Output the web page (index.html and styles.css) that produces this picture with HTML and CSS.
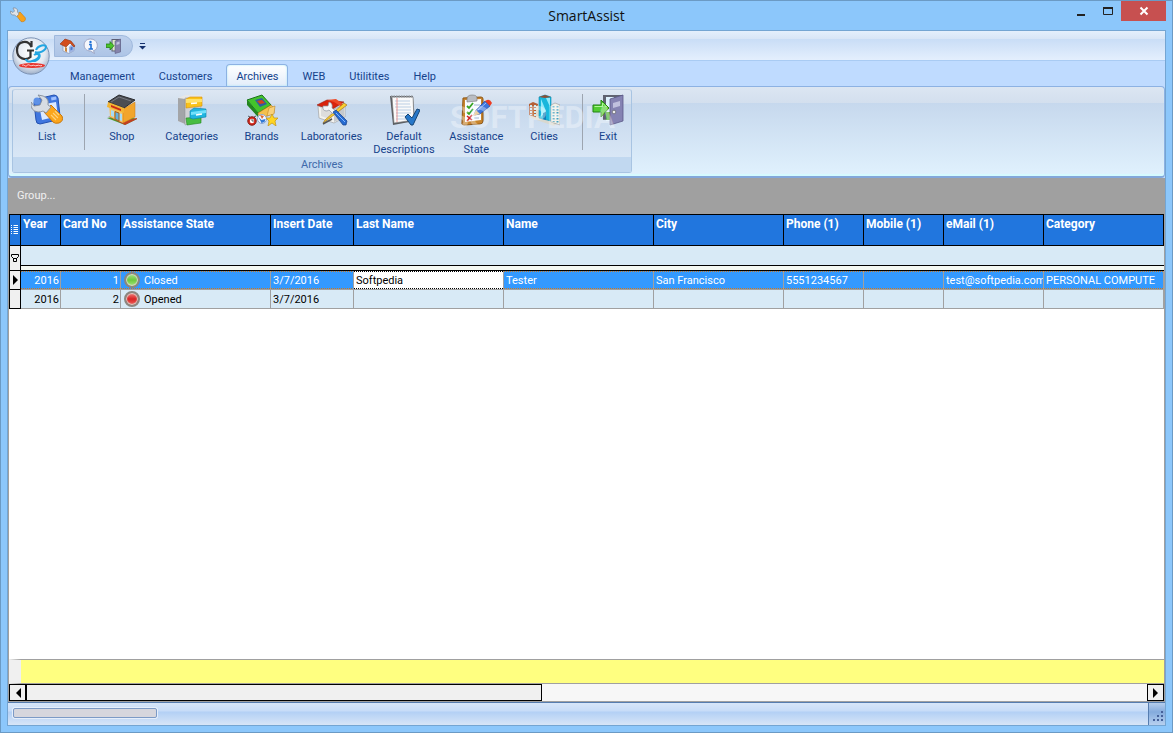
FILE: index.html
```html
<!DOCTYPE html>
<html lang="en">
<head>
  <meta charset="UTF-8" />
  <meta name="viewport" content="width=device-width, initial-scale=1.0"/>
  <title>SmartAssist</title>
  <link rel="stylesheet" href="styles.css">
</head>
<body>
<div class="window">

  <header class="titlebar">
    <svg class="app-icon" viewBox="0 0 16 16">
      <path d="M6 8l4-3 5 5.500c1.500 2.500-1 5-4 4z" fill="#f7a21b" stroke="#c9790d" stroke-width=".6"/>
      <path d="M3 1l1.500 3-1.500 1.500L.5 4C0 7 2 8.500 4.500 8l2 1.500L9 7 7.500 5C8 2 6 .5 3 1z" fill="#dfe3e8" stroke="#7f8893" stroke-width=".7"/>
    </svg>
    <h1>SmartAssist</h1>
    <div class="window-buttons">
      <button class="win-btn" aria-label="Minimize"><svg viewBox="0 0 12 12"><path d="M2 10h8" stroke="#222" stroke-width="2"/></svg></button>
      <button class="win-btn" aria-label="Maximize"><svg viewBox="0 0 12 12"><path d="M1.500 2.500h9v7h-9z" fill="none" stroke="#222"/><path d="M1 3h10" stroke="#222" stroke-width="2"/></svg></button>
      <button class="win-btn close-btn" aria-label="Close"><svg viewBox="0 0 12 12"><path d="M2.500 2.500l7 7M9.500 2.500l-7 7" stroke="#fff" stroke-width="2"/></svg></button>
    </div>
  </header>

  <div class="client">

    <div class="quick-bar">
      <button class="orb" aria-label="Application menu">
        <svg viewBox="0 0 38 38">
          <defs>
            <radialGradient id="orbFill" cx=".5" cy=".4" r=".6">
              <stop offset="0" stop-color="#ffffff"/>
              <stop offset=".65" stop-color="#e3e9f1"/>
              <stop offset="1" stop-color="#9fb0c9"/>
            </radialGradient>
          </defs>
          <circle cx="19" cy="19" r="18.200" fill="url(#orbFill)" stroke="#7d93b4"/>
          <path d="M19.500 4v6C16 2 5 4 5 13c0 9 9 11 13.500 7v-6M15 13.500h7" fill="none" stroke="#333" stroke-width="2.200"/>
          <path d="M14 22c0 4 8 3 12-1 3-4-1-5-4-3M24 13c2-5 10-6 10-3s-6 7-11 5M26 16c3 2 2 6-3 8" fill="none" stroke="#22a5e2" stroke-width="2"/>
          <ellipse cx="20" cy="28.500" rx="13" ry="2.500" fill="#e8352e"/>
          <path d="M10 28.500c2-2 3 2 5 0s3 1 5 0 3 1 5 0 3 1 5 0" fill="none" stroke="#fff" stroke-width=".8"/>
        </svg>
      </button>
      <div class="quick-access">
        <button aria-label="Home">
          <svg viewBox="0 0 16 16">
            <path d="M3 7v6l6 2.500 5-3V7l-3-3z" fill="#eef1f7" stroke="#7d8aa8" stroke-width=".6"/>
            <path d="M9 15V9l3-3 2 2v5z" fill="#9eb4e2"/><path d="M10.500 9.500l2-1v3l-2 1z" fill="#4d79cb"/>
            <path d="M0 6l5-5 6 2 4 5-1 1-4-4-4 4z" fill="#d34d1c" stroke="#8f300f" stroke-width=".6"/>
            <path d="M5 9l2 .7V14l-2-.8z" fill="#c9843a"/>
          </svg>
        </button>
        <button aria-label="Information">
          <svg viewBox="0 0 16 16">
            <path d="M7.500 1C16 1 16 12 10.500 12.500l1 3-4-2.500C-1 13-1 1 7.500 1z" fill="#f5f7fc" stroke="#9aa0c0" stroke-width=".9"/>
            <circle cx="7.500" cy="4" r="1.200" fill="#1d70d8"/>
            <path d="M6 6.500h2V11M5.500 11h4.500" fill="none" stroke="#1d70d8" stroke-width="1.600"/>
          </svg>
        </button>
        <button aria-label="Exit">
          <svg viewBox="0 0 32 32">
            <path d="M11 2h18v25H11z" fill="#5c5e73"/><path d="M13 4h8v21h-8z" fill="#dce9c8"/>
            <path d="M18 6l11-4v26l-11 3z" fill="#8584ab" stroke="#55557d"/><path d="M21 9l6-2v5l-6 2z" fill="#c0c0de"/>
            <path d="M0 12h8V7l8 8.500L8 24v-5H0z" fill="#4bc32b" stroke="#237c12" stroke-width="1.500"/>
          </svg>
        </button>
      </div>
      <button class="customize" aria-label="Customize toolbar"><svg viewBox="0 0 7 7"><path d="M1 .5h5" stroke="#15316e"/><path d="M0 3h7L3.500 6.500z" fill="#15316e"/></svg></button>
    </div>

    <nav class="tabs">
      <a href="#">Management</a>
      <a href="#">Customers</a>
      <a href="#" class="active">Archives</a>
      <a href="#">WEB</a>
      <a href="#">Utilitites</a>
      <a href="#">Help</a>
    </nav>

    <section class="ribbon">
      <div class="ribbon-group">
        <div class="ribbon-items">
          <button class="item list">
            <svg viewBox="0 0 32 32">
              <path d="M6 5l17-4q3 0 4 3l2 18q0 3-3 4L9 30q-4 0-4-4L3 9q0-3 3-4z" fill="#3f76df" stroke="#2451b0"/>
              <path d="M8 11l17-3 2 14-16 4z" fill="#dbe9ff"/><path d="M20 3.500l5-1 .5 3-5 1z" fill="#9fc0ff"/>
              <path d="M13 18l7-7 11 11q2 5-3 7-4 1-6-1z" fill="#fba51c" stroke="#c87810"/>
              <path d="M22 19l5 5M20 21l5 5M24 17l4 4" stroke="#ffd27a" stroke-width="1.200"/>
              <path d="M7 1l4 5-2 5-6 1-3-4q-1 9 7 10 3 0 5-1l3 2 5-6-3-2q2-9-10-10z" fill="#d7dce3" stroke="#838c99" stroke-width=".9"/>
              <circle cx="6" cy="7" r="3.500" fill="#5e91e6"/>
            </svg>
            <span>List</span>
          </button>
          <div class="separator"></div>
          <button class="item">
            <svg viewBox="0 0 32 32">
              <path d="M1 24l15-3 15 4-12 6z" fill="#4f9a2d"/><path d="M2 22l13 7 4 2 12-6v-1l-12 3z" fill="#c33e22"/>
              <path d="M3 10l14 5v14L4 23z" fill="#f5c363"/><path d="M17 15l12-7v15l-12 6z" fill="#f2a52c" stroke="#c97b16" stroke-width=".5"/>
              <path d="M2 8L13 1l16 5-11 8z" fill="#4b4d52" stroke="#292a2d"/><path d="M5 8l8-5 12 4" fill="none" stroke="#777a80"/>
              <path d="M2 8l16 6v5L1 13z" fill="#f3b433"/><path d="M5 11l10 4v2L5 13z" fill="#ca2918"/>
              <path d="M5 16l3 1v6l-3-1zM13 19l3 1v7l-3-1z" fill="#a9dcf5"/><path d="M9 17.500l4 1.500v8l-4-2z" fill="#66b1dc" stroke="#a65f18"/>
            </svg>
            <span>Shop</span>
          </button>
          <button class="item">
            <svg viewBox="0 0 32 32">
              <path d="M2 4L9 1h17v26l-15 4-9-4z" fill="#e7e7e7"/><path d="M2 4l7 1v25l-7-3z" fill="#a3a5a8"/><path d="M9 4h16v23L9 31z" fill="#cfd1d4" stroke="#8a8c90" stroke-width=".5"/>
              <path d="M10 24l15-1v6l-14 2z" fill="#47bd42" stroke="#24881f" stroke-width=".6"/>
              <path d="M10 5l4-2h12v9l-16 2z" fill="#f9c21a" stroke="#d78f08" stroke-width=".6"/><path d="M10 5h16v3l-16 1z" fill="#ffe268"/><path d="M15 9.500l6-.5" stroke="#fff" stroke-width="1.500"/>
              <path d="M14 17l4-3 12 1v8l-13 2-3-1z" fill="#20b5df" stroke="#087fa9" stroke-width=".6"/><path d="M15 18l15-2v3l-15 2z" fill="#71e1fb"/><path d="M20 21l6-1" stroke="#fff" stroke-width="1.500"/>
            </svg>
            <span>Categories</span>
          </button>
          <button class="item">
            <svg viewBox="0 0 32 32">
              <path d="M1 6L16 1l9 10-13 8z" fill="#43c32c" stroke="#19721c"/><path d="M1 6v5l11 12v-4z" fill="#23851e"/><path d="M12 19l13-8 3 3v5l-14 6z" fill="#f4c04c" stroke="#b77a1b" stroke-width=".6"/>
              <path d="M9 6l7-2 5 6-7 3z" fill="#325c9f"/><path d="M11 7l5-1 3 3-5 1z" fill="#d6421a"/>
              <path d="M23 14l6-2-1 8-7 2z" fill="#f8d17a" stroke="#b77a1b" stroke-width=".5"/>
              <circle cx="6" cy="27" r="4.200" fill="#d52d21" stroke="#84140c"/><circle cx="6" cy="27" r="2.200" fill="#fff"/><path d="M6 25v2h2M2 22l2 1M10 22l-2 1" stroke="#222" stroke-width=".7" fill="none"/>
              <circle cx="16" cy="25" r="4.500" fill="#f5f8ff" stroke="#8aa4cf"/><path d="M12.500 23l3 3 4-1-1 3-3 1z" fill="#3079d5"/><path d="M14 21l4 1-2 3z" fill="#e26929"/>
              <path d="M26 20l2 4h4l-3 3 1 5-4-3-4 3 1-5-3-3h4z" fill="#ffd522" stroke="#c29214" stroke-width=".7"/>
            </svg>
            <span>Brands</span>
          </button>
          <button class="item">
            <svg viewBox="0 0 32 32">
              <path d="M2 12l13 5 14-7v13l-11 6-15-5z" fill="#f2f2ef" stroke="#999" stroke-width=".6"/><path d="M5 22l11 4V16L5 13z" fill="#ddd"/><path d="M18 17l10-5v11l-10 5z" fill="#c5c9cd"/>
              <path d="M1 11l10-5 17 2-13 8z" fill="#d9230c" stroke="#94190d" stroke-width=".6"/><path d="M11 6l9-1 8 6-2 2-8-5z" fill="#ed4a27"/>
              <path d="M31 11L10 27l-3 2 2-3L28 9z" fill="#f8cf32" stroke="#9a6a10" stroke-width=".6"/><path d="M7 30l9-5" stroke="#555" stroke-width="1.500"/>
              <path d="M7 12q-1 5 4 5l2-1 4 4 3-3-4-3q1-5-3-6l-1 4z" fill="#f3f5f8" stroke="#8c929d" stroke-width=".7"/>
              <path d="M17 18l3-2 11 11-1 4h-3z" fill="#266bd1" stroke="#153e86" stroke-width=".7"/><path d="M20 19l9 9" stroke="#82b7ff"/>
            </svg>
            <span>Laboratories</span>
          </button>
          <button class="item wide">
            <svg viewBox="0 0 32 32">
              <path d="M2 2h23l2 25-22 4z" fill="#5a5d61"/><path d="M4 3h21l1 23-20 3z" fill="#fafafa" stroke="#777" stroke-width=".6"/>
              <path d="M7 7h15M7 10h15M7 13h16M8 16h15M8 19h15M8 22h13M8 25h10" stroke="#a9c3de" stroke-width=".8"/><path d="M9 4v24" stroke="#e57b78" stroke-width=".8"/>
              <path d="M3 2.500h22" stroke="#8f9297" stroke-width="2" stroke-dasharray="1.500 1"/>
              <path d="M17 23l3-3 4 4 5-9 3 1-7 15h-2z" fill="#2878c9" stroke="#174676"/>
            </svg>
            <span>Default<br>Descriptions</span>
          </button>
          <button class="item">
            <svg viewBox="0 0 32 32">
              <path d="M3 4l18-1q2 0 2 2v22q0 3-3 3L4 31q-3 0-2-3z" fill="#c6832c" stroke="#8f5715"/>
              <path d="M5 6l16-1v21L5 28z" fill="#f9fbff"/><path d="M7 5q0-4 5-4t5 3v3L7 8z" fill="#b9bdc3" stroke="#777" stroke-width=".6"/>
              <path d="M7 12l2 2 4-5M7 18l2 2 4-5" fill="none" stroke="#37a323" stroke-width="1.800"/><path d="M7 22l5 4M12 21l-5 6" stroke="#cf1f1f" stroke-width="1.600"/><path d="M14 11h6M14 24h5" stroke="#9fb4d4"/>
              <path d="M14 21l2-5L25 7l5 5-10 8z" fill="#3e75db" stroke="#2147a0" stroke-width=".7"/><path d="M25 7l2-1q3-1 5 3l-2 3z" fill="#ec3b22"/><path d="M13 22l3-6 4 4z" fill="#e9cfa4"/><path d="M18 16l8-7" stroke="#9cc0ff"/>
            </svg>
            <span>Assistance<br>State</span>
          </button>
          <button class="item narrow">
            <svg viewBox="0 0 32 32">
              <path d="M0 23l9-2 22 7-5 4z" fill="#d8d8cf"/>
              <path d="M1 10l4-2 5 2v14l-9-3z" fill="#b56036"/><path d="M3 11v10M7 11v12" stroke="#cbe8f4" stroke-width="2" stroke-dasharray="2 1"/>
              <path d="M8 12l4-1v14l-4-1z" fill="#e1dccb"/>
              <path d="M11 3l6-2 6 2v24l-12-3z" fill="#18b7dc" stroke="#0989b2" stroke-width=".6"/><path d="M13 5l5 12-5 6zM22 4v9l-4-9z" fill="#93eafa"/><path d="M11 3l6-2 6 2-6 1z" fill="#8a5037"/><path d="M15 19l3-1v8l-3-1z" fill="#0b7ebb"/>
              <path d="M23 11l4-2 5 2v20l-9-3z" fill="#f0f0e9" stroke="#888" stroke-width=".5"/><path d="M25.500 12v16M29.500 12v17" stroke="#43a0c2" stroke-width="2" stroke-dasharray="1.500 1.500"/>
            </svg>
            <span>Cities</span>
          </button>
          <div class="separator"></div>
          <button class="item exit">
            <svg viewBox="0 0 32 32">
              <path d="M11 1h20v25H11z" fill="#606371"/><path d="M14 3h8v24h-8z" fill="#dff3ff"/><path d="M14 18h8v8h-8z" fill="#4eab31"/>
              <path d="M18 5l13-4v26l-13 4z" fill="#8583b3" stroke="#5b5988" stroke-width=".8"/><path d="M21 9l7-2v5l-7 2z" fill="#c0c0de"/><circle cx="22" cy="18" r="1.800" fill="#eee" stroke="#555" stroke-width=".6"/>
              <path d="M1 11h8V6l8 8-8 9v-5H1z" fill="#53cd32" stroke="#248313"/><path d="M2.500 12.500h8V9l4 4" fill="none" stroke="#b2f79a"/>
            </svg>
            <span>Exit</span>
          </button>
        </div>
        <div class="group-caption">Archives</div>
        <div class="watermark">SOFTPEDIA</div>
      </div>
    </section>

    <main class="grid">
      <div class="group-panel">Group...</div>

      <div class="grid-body">
        <table>
          <colgroup>
            <col class="c-mark"><col class="c-year"><col class="c-card"><col class="c-long"><col class="c-date"><col class="c-long"><col class="c-long"><col class="c-city"><col class="c-phone"><col class="c-phone"><col class="c-mail"><col>
          </colgroup>
          <thead>
            <tr>
              <th class="mark" aria-label="Columns"><svg viewBox="0 0 8 10"><path d="M2.500 .5H7M2.500 2.500H7M2.500 4.500H7M2.500 6.500H7M2.500 8.500H7" stroke="#fff"/><path d="M.5 0v9" stroke="#fff" stroke-dasharray="1 1"/></svg></th>
              <th>Year</th>
              <th>Card No</th>
              <th>Assistance State</th>
              <th>Insert Date</th>
              <th>Last Name</th>
              <th>Name</th>
              <th>City</th>
              <th>Phone (1)</th>
              <th>Mobile (1)</th>
              <th>eMail (1)</th>
              <th>Category</th>
            </tr>
          </thead>
          <tbody>
            <tr class="filter">
              <td class="mark"><svg viewBox="0 0 8 10"><path d="M.5 1.500h7v2l-2 2h-3l-2-2zM2.500 5.500h3v3h-3z" fill="none" stroke="#000"/></svg></td>
              <td colspan="11"></td>
            </tr>
            <tr class="selected">
              <td class="mark"><svg viewBox="0 0 8 10"><path d="M2 0l5 5-5 5z"/></svg></td>
              <td class="num">2016</td>
              <td class="num">1</td>
              <td><span class="state"><i class="led green"></i>Closed</span></td>
              <td>3/7/2016</td>
              <td class="editing"><input type="text" value="Softpedia" aria-label="Last Name"></td>
              <td>Tester</td>
              <td>San Francisco</td>
              <td>5551234567</td>
              <td></td>
              <td>test@softpedia.com</td>
              <td>PERSONAL COMPUTE</td>
            </tr>
            <tr>
              <td class="mark"></td>
              <td class="num">2016</td>
              <td class="num">2</td>
              <td><span class="state"><i class="led red"></i>Opened</span></td>
              <td>3/7/2016</td>
              <td></td>
              <td></td>
              <td></td>
              <td></td>
              <td></td>
              <td></td>
              <td></td>
            </tr>
          </tbody>
        </table>
      </div>

      <div class="summary"></div>

      <div class="scrollbar">
        <button aria-label="Scroll left"><svg viewBox="0 0 6 10"><path d="M6 0v10L1 5z"/></svg></button>
        <div class="track"><div class="thumb"></div></div>
        <button aria-label="Scroll right"><svg viewBox="0 0 6 10"><path d="M0 0v10l5-5z"/></svg></button>
      </div>
    </main>

    <footer class="statusbar">
      <div class="progress"></div>
      <div class="grip">
        <svg viewBox="0 0 12 12"><path d="M8 0h2v2H8zM4 4h2v2H4zM8 4h2v2H8zM0 8h2v2H0zM4 8h2v2H4zM8 8h2v2H8z" fill="#45619a"/></svg>
      </div>
    </footer>

  </div>
</div>
</body>
</html>
```
FILE: styles.css
```css
* {
  box-sizing: border-box;
  margin: 0;
  padding: 0;
}

body {
  font-family: Roboto, "Liberation Sans", sans-serif;
  font-size: 11px;
  line-height: 13px;
  color: #000;
}

button {
  font: inherit;
  color: inherit;
  background: none;
  border: none;
}

svg {
  display: block;
}

.window {
  display: flex;
  flex-direction: column;
  height: 100vh;
  padding: 0 6px;
  border: 1px solid #6b9ac4;
  border-bottom-width: 1px;
  padding-bottom: 6px;
  background: #8cc7fb;
}

/* Title bar */
.titlebar {
  position: relative;
  flex: 0 0 29px;
}

.app-icon {
  position: absolute;
  left: 3px;
  top: 6px;
  width: 16px;
  height: 16px;
}

.titlebar h1 {
  font-family: "Open Sans", "Noto Sans", sans-serif;
  font-size: 14px;
  font-weight: 400;
  line-height: 29px;
  text-align: center;
  color: #111;
}

.window-buttons {
  position: absolute;
  top: 0;
  right: 0;
  display: flex;
}

.win-btn {
  display: flex;
  align-items: center;
  justify-content: center;
  width: 27px;
  height: 20px;
}

.win-btn svg {
  width: 12px;
  height: 12px;
}

.close-btn {
  width: 45px;
  background: #c75050;
}

.client {
  display: flex;
  flex-direction: column;
  flex: 1;
  min-height: 0;
  border: 1px solid #74a5d2;
  background: #bfdbff;
}

/* Quick access bar */
.quick-bar {
  position: relative;
  display: flex;
  align-items: flex-start;
  flex: 0 0 30px;
  padding: 4px 0 0 46px;
  border-bottom: 1px solid #a9cbf3;
  background: linear-gradient(#e4effc 0, #d8e5f6 8px, #c9ddf6 8px, #e4effd 29px);
}

.orb {
  position: absolute;
  left: 4px;
  top: 6px;
  width: 38px;
  height: 38px;
  z-index: 2;
}

.orb svg {
  width: 38px;
  height: 38px;
}

.quick-access {
  display: flex;
  align-items: center;
  gap: 7px;
  height: 22px;
  width: 79px;
  padding-left: 5px;
  border: 1px solid #9fb9dd;
  border-radius: 0 11px 11px 0;
  background: linear-gradient(#bdd0ec, #aec5e6);
}

.quick-access svg {
  width: 16px;
  height: 16px;
}

.customize {
  margin: 8px 0 0 6px;
}

.customize svg {
  width: 7px;
  height: 7px;
}

/* Tabs */
.tabs {
  display: flex;
  align-items: flex-end;
  flex: 0 0 25px;
  padding-left: 52px;
  z-index: 1;
}

.tabs a {
  height: 22px;
  padding: 5px 9px 0;
  margin-right: 4px;
  border: 1px solid transparent;
  color: #15428b;
  text-decoration: none;
}

.tabs a.active {
  border-color: #8db2e3;
  border-bottom: none;
  border-radius: 4px 4px 0 0;
  background: linear-gradient(#ffffff, #e3edfa);
  box-shadow: inset 0 0 2px #9fe8f5;
}

/* Ribbon */
.ribbon {
  flex: 0 0 92px;
  padding: 2px 3px;
  border: 1px solid #8db2e3;
  border-bottom: 2px solid #83a8db;
  border-radius: 4px;
  background: linear-gradient(#dce6f2 0, #d3dfee 16px, #c6d8ed 16px, #e0f1fd 88px);
  box-shadow: inset 0 -2px 1px #d5fbff;
}

.ribbon-group {
  position: relative;
  width: 620px;
  height: 84px;
  border: 1px solid #a8c4e2;
  border-top-color: #c3d3e5;
  border-radius: 3px;
  background: linear-gradient(#dde7f3 0, #d2dfee 14px, #c5d7ec 14px, #d9e7f6 68px);
}

.ribbon-items {
  display: flex;
  height: 67px;
  padding-top: 4px;
}

.item {
  display: flex;
  flex-direction: column;
  align-items: center;
  gap: 4px;
  width: 70px;
  color: #15428b;
}

.item svg {
  width: 32px;
  height: 32px;
}

.item span {
  white-space: nowrap;
}

.item.list {
  padding-right: 2px;
}

.item.wide {
  width: 75px;
}

.item.narrow {
  width: 66px;
  margin-right: 4px;
}

.item.exit {
  width: 46px;
}

.separator {
  width: 1px;
  height: 56px;
  margin: 0 2px 0 1px;
  background: #9da5b0;
}

.group-caption {
  height: 15px;
  line-height: 15px;
  text-align: center;
  color: #3e6aaa;
  background: #c1d8f0;
}

.watermark {
  position: absolute;
  left: 437px;
  top: 15px;
  font-size: 31px;
  line-height: 26px;
  font-weight: 700;
  color: rgba(255, 255, 255, 0.35);
  pointer-events: none;
}

/* Data grid */
.grid {
  display: flex;
  flex-direction: column;
  flex: 1;
  min-height: 0;
  padding: 0 1px 1px;
  background: #a0a0a0;
}

.group-panel {
  flex: 0 0 36px;
  padding-left: 8px;
  line-height: 36px;
  color: #f0f0f0;
}

.grid-body {
  flex: 1;
  min-height: 0;
  overflow: hidden;
  background: #fff;
}

table {
  width: 100%;
  table-layout: fixed;
  border-collapse: separate;
  border-spacing: 0;
  border-top: 1px solid #000;
  border-left: 1px solid #000;
}

.c-mark { width: 11px; }
.c-year { width: 40px; }
.c-card { width: 60px; }
.c-long { width: 150px; }
.c-date { width: 83px; }
.c-city { width: 130px; }
.c-phone { width: 80px; }
.c-mail { width: 100px; }

th {
  height: 31px;
  padding: 3px 2px 0;
  border-right: 1px solid #000;
  border-bottom: 1px solid #000;
  background: #2176de;
  color: #fff;
  font-size: 12px;
  font-weight: 700;
  text-align: left;
  vertical-align: top;
  white-space: nowrap;
}

td {
  height: 19px;
  padding: 0 0 0 2px;
  border-right: 1px solid #a0a0a0;
  border-bottom: 1px solid #a0a0a0;
  background: #d8eaf6;
  white-space: nowrap;
  overflow: hidden;
}

.mark {
  padding: 0 1px;
  vertical-align: middle;
}

.mark svg {
  width: 8px;
  height: 10px;
}

td.mark {
  border-right-color: #000;
  border-bottom-color: #000;
  background: #f0f0f0;
}

.filter td {
  height: 25px;
  border-bottom-color: #000;
}

.filter td:last-child {
  border-right: none;
  background: linear-gradient(#d8eaf6 19px, #000 19px, #000 20px, #f4f8f2 20px);
}

.num {
  padding-right: 1px;
  text-align: right;
}

.selected td:not(.mark) {
  color: #fff;
  background:
    repeating-linear-gradient(90deg, #c77826 0 1px, transparent 1px 2px) top / 100% 1px no-repeat,
    repeating-linear-gradient(90deg, #c77826 0 1px, transparent 1px 2px) bottom / 100% 1px no-repeat,
    #3399ff;
  background-clip: padding-box;
  background-origin: padding-box;
}

.selected td.editing:not(.mark) {
  padding: 0;
  background: #fff;
}

.editing input {
  display: block;
  width: 100%;
  height: 18px;
  padding: 0 2px;
  border: none;
  border-top: 1px dotted #000;
  border-bottom: 1px dotted #000;
  outline: none;
  background: #fff;
  color: #000;
  font: inherit;
}

.state {
  display: flex;
  align-items: center;
  gap: 4px;
  padding-left: 1px;
}

.led {
  flex: none;
  width: 16px;
  height: 16px;
  border: 2px solid #8b8780;
  border-radius: 50%;
  box-shadow: inset 0 0 1px 1px #ddd8d0;
  background-origin: border-box;
}

.led.green {
  background-image: linear-gradient(#b9ed9b, #6cc83f 50%, #b4f28a);
}

.led.red {
  background-image: linear-gradient(#f9a09a, #d92424 50%, #f5766e);
}

.summary {
  flex: 0 0 25px;
  border: solid #a0a0a0;
  border-width: 1px 0;
  border-left: 12px solid #f0f0f0;
  background: #ffff80;
}

/* Scrollbar */
.scrollbar {
  display: flex;
  flex: 0 0 17px;
}

.scrollbar button {
  display: flex;
  align-items: center;
  justify-content: center;
  width: 17px;
  border: 1px solid #000;
  background: #f0f0f0;
}

.scrollbar svg {
  width: 6px;
  height: 10px;
}

.track {
  flex: 1;
  background: #f7f7f7;
}

.thumb {
  width: 46%;
  height: 17px;
  border: 1px solid #000;
  background: #f0f0f0;
}

/* Status bar */
.statusbar {
  display: flex;
  justify-content: space-between;
  flex: 0 0 23px;
  border-top: 1px solid #567db0;
  background: linear-gradient(#d7e6f9 0, #c7dcf8 8px, #b3d0f5 9px, #d7e5f7 22px);
}

.progress {
  width: 144px;
  height: 10px;
  margin: 5px 0 0 5px;
  border: 1px solid #7c9ac6;
  border-radius: 2px;
  background: #d6d6dd;
  box-shadow: 0 0 0 1px #e6effb;
}

.grip {
  display: flex;
  align-items: flex-end;
  justify-content: flex-end;
  width: 17px;
  border-left: 1px solid #567db0;
  background: linear-gradient(#b5cdec, #84abdd 9px, #b7d0ef);
}

.grip svg {
  width: 12px;
  height: 12px;
  margin-bottom: 2px;
}
```
